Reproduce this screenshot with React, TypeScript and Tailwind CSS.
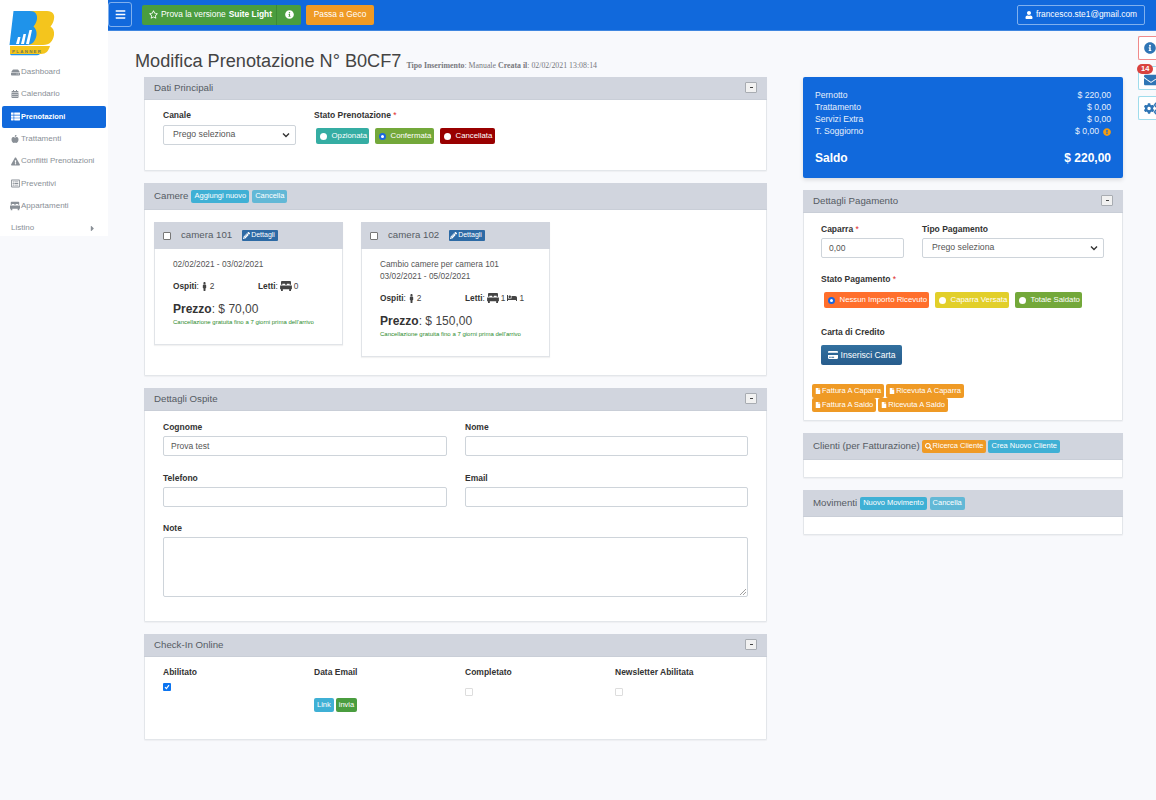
import type { ReactNode } from "react";
import {
  FaAppleAlt,
  FaBars,
  FaBed,
  FaCalendarAlt,
  FaCaretRight,
  FaCogs,
  FaCreditCard,
  FaEnvelope,
  FaExclamationCircle,
  FaExclamationTriangle,
  FaFile,
  FaHdd,
  FaInfoCircle,
  FaMale,
  FaPencilAlt,
  FaRegListAlt,
  FaRegStar,
  FaSearch,
  FaThList,
  FaUser,
} from "react-icons/fa";

function Logo() {
  return (
    <svg width="46" height="46" viewBox="0 0 46 46" className="block">
      <path d="M20 1h18c6 0 8 4 7 8-.5 3-2 6-3.500 7.500C44 18 45.500 21 45 25c-1 6-4 10-11 10H20z" fill="#f4c51d" />
      <path d="M4.500 1h16c6 0 8 3.500 7.500 8-.5 3-2 6-3.500 7.500 2 2 3.500 4.500 3 8.500-1 6-4 10-10 10H.5z" fill="#1f93ea" />
      <path d="M7 34l2-7h2.500l-1.500 7zM12 34l2.500-10H17l-2 10zM17 34l3.500-14H23l-3 14z" fill="#fff" />
      <path d="M1 36h40c-1.500 5-4 8-9 8H1z" fill="#f4c51d" />
      <path d="M1 44h30c-1 .8-2 1.200-3 1.200H2z" fill="#1f93ea" />
      <text x="3" y="42.500" fontSize="4.400" letterSpacing="1.300" fill="#6f7a55" fontFamily="'Liberation Sans', sans-serif" fontWeight="700">
        PLANNER
      </text>
    </svg>
  );
}

// front view bed, the fa set only has the side one
function FrontBed() {
  return (
    <svg width="12" height="10" viewBox="0 0 13 11" className="inline-block" fill="currentColor">
      <path d="M2 0h9a1 1 0 0 1 1 1v3h-1.500V3h-3v1h-2V3h-3v1H1V1a1 1 0 0 1 1-1z" />
      <path d="M0 5h13v4h-1v2h-2V9H3v2H1V9H0z" />
    </svg>
  );
}

const menu = [
  { label: "Dashboard", icon: <FaHdd size={9} /> },
  { label: "Calendario", icon: <FaCalendarAlt size={8} /> },
  { label: "Prenotazioni", icon: <FaThList size={9} />, active: true },
  { label: "Trattamenti", icon: <FaAppleAlt size={8} /> },
  { label: "Conflitti Prenotazioni", icon: <FaExclamationTriangle size={9} /> },
  { label: "Preventivi", icon: <FaRegListAlt size={9} /> },
  { label: "Appartamenti", icon: <FrontBed /> },
];

function Sidebar() {
  return (
    <aside className="w-[108px] h-[236px] shrink-0 bg-white">
      <div className="h-[61px] pt-[10px] pl-[9px]">
        <Logo />
      </div>
      {menu.map((m) => (
        <div
          key={m.label}
          className={
            m.active
              ? "mx-[2px] h-[22.3px] rounded-[2px] bg-[#1169dc] text-white font-semibold flex items-center gap-[1px] pl-[8px] text-[7.4px] whitespace-nowrap"
              : "mx-[2px] h-[22.3px] text-[#8a9097] flex items-center gap-[1px] pl-[8px] text-[8px] whitespace-nowrap"
          }
        >
          <span className="w-[10px] flex justify-center shrink-0">{m.icon}</span>
          {m.label}
        </div>
      ))}
      <div className="mx-[2px] h-[22px] text-[#8a9097] flex items-center justify-between pl-[9px] pr-[9px] text-[8px]">
        Listino
        <FaCaretRight size={9} />
      </div>
    </aside>
  );
}

function Topbar() {
  return (
    <header className="h-[31px] bg-[#1169dc] border-b border-[#3f86e0] flex items-center pr-[11px] text-white">
      <button className="w-[24px] h-[25px] -mt-[1px] rounded-[3px] border border-[#7fb0ee] flex items-center justify-center">
        <FaBars size={11} />
      </button>
      <div className="ml-[10px] flex w-[159px] h-[20px] -mt-[1px] rounded-[2px] bg-[#4a9d3f] text-[8.4px]">
        <div className="w-[135px] flex items-center gap-[3px] pl-[7px] border-r border-[#3d8a35]">
          <FaRegStar size={9} />
          <span>Prova la versione</span>
          <span className="font-bold">Suite Light</span>
        </div>
        <div className="flex-1 flex items-center justify-center">
          <FaInfoCircle size={9} />
        </div>
      </div>
      <div className="ml-[5px] w-[68px] h-[20px] -mt-[1px] rounded-[2px] bg-[#ef9a25] text-[8.4px] flex items-center justify-center">
        Passa a Geco
      </div>
      <div className="ml-auto h-[20px] -mt-[1px] w-[128px] rounded-[2px] border border-[#7fb0ee] text-[8.4px] flex items-center justify-center gap-[3px] whitespace-nowrap">
        <FaUser size={8} />
        francesco.ste1@gmail.com
      </div>
    </header>
  );
}

function Panel({
  title,
  extra,
  collapse = true,
  className = "",
  children,
}: {
  title: string;
  extra?: ReactNode;
  collapse?: boolean;
  className?: string;
  children?: ReactNode;
}) {
  return (
    <section className={"bg-white border border-[#e3e6ea] rounded-[1px] shadow-[0_1px_1px_rgba(0,0,0,0.04)] " + className}>
      <div
        className={
          (extra ? "h-[27px]" : "h-[23px]") +
          " -m-px mb-0 bg-[#d1d5de] flex items-center px-[10px] text-[#555b63] border-b border-[#c9ced7]"
        }
      >
        <span className="text-[9.7px] whitespace-nowrap">{title}</span>
        {extra}
        {collapse && (
          <span className="ml-auto w-[12px] h-[11px] -mt-px bg-[#f1f1f1] border border-[#a8acb2] rounded-[1px] flex items-center justify-center">
            <span className="w-[3px] h-[1px] bg-[#444]" />
          </span>
        )}
      </div>
      {children}
    </section>
  );
}

function Label({ children, req }: { children: ReactNode; req?: boolean }) {
  return (
    <div className="text-[8.5px] font-bold text-[#333] leading-[12px] whitespace-nowrap">
      {children}
      {req && <span className="text-[#e02b2b] font-normal"> *</span>}
    </div>
  );
}

function Radio({ color, label, on, w }: { color: string; label: string; on?: boolean; w: string }) {
  return (
    <span className={"h-[16px] rounded-[2px] text-white text-[7.8px] flex items-center gap-[5px] pl-[3.5px] whitespace-nowrap " + color + " " + w}>
      <span
        className={
          on
            ? "w-[7px] h-[7px] rounded-full bg-white border-[2px] border-[#1a66e0] shrink-0"
            : "w-[7px] h-[7px] rounded-full bg-white shrink-0"
        }
      />
      {label}
    </span>
  );
}

function Tag({ color, children, h = "h-[13px]" }: { color: string; children: ReactNode; h?: string }) {
  return (
    <span className={"inline-flex items-center gap-[1px] px-[3px] rounded-[2px] text-white text-[7.5px] font-normal whitespace-nowrap " + h + " " + color}>
      {children}
    </span>
  );
}

function Input({ value, className = "" }: { value?: string; className?: string }) {
  return (
    <div className={"h-[20px] bg-white border border-[#ced4da] rounded-[2px] flex items-center px-[7px] text-[8.5px] text-[#555] " + className}>
      {value}
    </div>
  );
}

function Select({ className = "" }: { className?: string }) {
  return (
    <div className={"h-[20px] bg-white border border-[#ced4da] rounded-[2px] flex items-center justify-between pl-[9px] pr-[5px] text-[8.7px] text-[#555] " + className}>
      Prego seleziona
      <svg width="8" height="6" viewBox="0 0 8 6" fill="none" stroke="#333" strokeWidth="1.4">
        <path d="M1 1.500l3 3 3-3" />
      </svg>
    </div>
  );
}

function RoomCard({
  name,
  note,
  dates,
  beds,
  price,
  className,
}: {
  name: string;
  note?: string;
  dates: string;
  beds: ReactNode;
  price: string;
  className: string;
}) {
  return (
    <div className={"w-[189px] bg-white border border-[#e1e4e8] shadow-[0_1px_1px_rgba(0,0,0,0.05)] " + className}>
      <div className="h-[27px] -m-px mb-0 bg-[#d1d5de] flex items-center pl-[9px] text-[9.7px] text-[#555b63]">
        <span className="w-[8px] h-[8px] bg-white border border-[#777] rounded-[1px]" />
        <span className="ml-[10px]">{name}</span>
        <span className="ml-[10px] h-[11px] px-[1px] pr-[3px] bg-[#2d6aa5] rounded-[1px] text-white text-[7px] flex items-center gap-[1px]">
          <FaPencilAlt size={7} />
          Dettagli
        </span>
      </div>
      <div className="pl-[18px] pt-[9px] text-[8.3px] text-[#555]">
        {note && <div className="leading-[12px]">{note}</div>}
        <div className="leading-[12px]">{dates}</div>
        <div className="mt-[10px] flex h-[12px] items-center text-[#444]">
          <div className="w-[85px] flex items-center gap-[1px]">
            <span>
              <b className="text-[#333]">Ospiti</b>:
            </span>
            <FaMale size={9} /> 2
          </div>
          <div className="flex items-center gap-[2px]">
            <span>
              <b className="text-[#333]">Letti</b>:
            </span>
            {beds}
          </div>
        </div>
        <div className="mt-[10px] text-[12px] leading-[14px] text-[#444]">
          <b className="text-[#333]">Prezzo</b>: $ {price}
        </div>
        <div className="text-[6px] leading-[9px] mt-[2px] text-[#2e8b2e] whitespace-nowrap">
          Cancellazione gratuita fino a 7 giorni prima dell'arrivo
        </div>
      </div>
    </div>
  );
}

function LeftColumn() {
  return (
    <div className="w-[623px] flex flex-col gap-[12px]">
      <Panel title="Dati Principali" className="h-[94px]">
        <div className="pl-[18px] pt-[9px] flex">
          <div className="w-[151px]">
            <Label>Canale</Label>
            <Select className="w-[133px] mt-[4px]" />
          </div>
          <div>
            <Label req>Stato Prenotazione</Label>
            <div className="mt-[7px] ml-[2px] flex gap-[6px]">
              <Radio color="bg-[#35ada3]" label="Opzionata" w="w-[53px]" />
              <Radio color="bg-[#73a83a]" label="Confermata" on w="w-[59px]" />
              <Radio color="bg-[#990000]" label="Cancellata" w="w-[55px]" />
            </div>
          </div>
        </div>
      </Panel>
      <Panel
        title="Camere"
        collapse={false}
        className="h-[193px]"
        extra={
          <span className="ml-[3px] flex gap-[3px]">
            <Tag color="bg-[#3fb0d5]">Aggiungi nuovo</Tag>
            <Tag color="bg-[#62b8d6]">Cancella</Tag>
          </span>
        }
      >
        <div className="pl-[9px] pt-[12px] flex gap-[18px] items-start">
          <RoomCard name="camera 101" dates="02/02/2021 - 03/02/2021" price="70,00" className="h-[123px]" beds={<><FrontBed /> 0</>} />
          <RoomCard
            name="camera 102"
            note="Cambio camere per camera 101"
            dates="03/02/2021 - 05/02/2021"
            price="150,00"
            className="h-[135px]"
            beds={<><FrontBed /> 1<FaBed size={10} /> 1</>}
          />
        </div>
      </Panel>
      <Panel title="Dettagli Ospite" className="h-[234px]">
        <div className="px-[18px] pt-[10px] grid grid-cols-[284px_283px] gap-x-[18px]">
          <div className="h-[51px]">
            <Label>Cognome</Label>
            <Input value="Prova test" className="mt-[3px]" />
          </div>
          <div className="h-[51px]">
            <Label>Nome</Label>
            <Input className="mt-[3px]" />
          </div>
          <div className="h-[50px]">
            <Label>Telefono</Label>
            <Input className="mt-[3px]" />
          </div>
          <div className="h-[50px]">
            <Label>Email</Label>
            <Input className="mt-[3px]" />
          </div>
          <div className="col-span-2">
            <Label>Note</Label>
            <div className="relative mt-[3px] h-[60px] bg-white border border-[#ced4da] rounded-[2px]">
              <svg width="6" height="6" viewBox="0 0 6 6" className="absolute right-[1px] bottom-[1px]" stroke="#777" strokeWidth="0.7">
                <path d="M0 6l6-6M3 6l3-3" />
              </svg>
            </div>
          </div>
        </div>
      </Panel>
      <Panel title="Check-In Online" className="h-[106px]">
        <div className="pl-[18px] pt-[9px] grid grid-cols-[151px_151px_150px_130px]">
          <div>
            <Label>Abilitato</Label>
            <span className="mt-[5px] w-[8px] h-[8px] bg-[#0b74f0] rounded-[1px] flex items-center justify-center">
              <svg width="6" height="6" viewBox="0 0 6 6" fill="none" stroke="#fff" strokeWidth="1.2">
                <path d="M1 3.200l1.400 1.400L5 1.200" />
              </svg>
            </span>
          </div>
          <div>
            <Label>Data Email</Label>
            <div className="mt-[20px] flex gap-[2px]">
              <Tag color="bg-[#3fb0d5]" h="h-[14px]">Link</Tag>
              <Tag color="bg-[#4a9d3f]" h="h-[14px]">invia</Tag>
            </div>
          </div>
          <div>
            <Label>Completato</Label>
            <span className="block mt-[10px] w-[8px] h-[8px] bg-white border border-[#ddd] rounded-[1px]" />
          </div>
          <div>
            <Label>Newsletter Abilitata</Label>
            <span className="block mt-[10px] w-[8px] h-[8px] bg-white border border-[#ddd] rounded-[1px]" />
          </div>
        </div>
      </Panel>
    </div>
  );
}

function OrangeDoc({ children }: { children: ReactNode }) {
  return (
    <Tag color="bg-[#ef9a25]" h="h-[14px]">
      <FaFile size={6} />
      <span className="text-[7.5px]">{children}</span>
    </Tag>
  );
}

function SummaryRow({ label, value }: { label: string; value: ReactNode }) {
  return (
    <div className="flex justify-between h-[12px] items-center text-[8.6px] text-[#e6effb]">
      <span>{label}</span>
      <span className="flex items-center gap-[4px]">{value}</span>
    </div>
  );
}

function RightColumn() {
  return (
    <div className="w-[320px] ml-[36px] flex flex-col">
      <div className="h-[101px] bg-[#1169dc] rounded-[2px] px-[12px] pt-[12px] shadow-[0_2px_4px_rgba(0,0,0,0.12)]">
        <div className="pt-[0.5px]">
          <SummaryRow label="Pernotto" value="$ 220,00" />
          <SummaryRow label="Trattamento" value="$ 0,00" />
          <SummaryRow label="Servizi Extra" value="$ 0,00" />
          <SummaryRow label="T. Soggiorno" value={<>$ 0,00 <FaExclamationCircle size={8} className="text-[#f39c12]" /></>} />
        </div>
        <div className="mt-[11.5px] flex justify-between text-[12px] font-bold text-white">
          <span>Saldo</span>
          <span>$ 220,00</span>
        </div>
      </div>
      <Panel title="Dettagli Pagamento" className="h-[231px] mt-[12px]">
        <div className="pl-[17px] pt-[10px]">
          <div className="flex">
            <div className="w-[101px]">
              <Label req>Caparra</Label>
              <Input value="0,00" className="w-[83px] mt-[3px]" />
            </div>
            <div>
              <Label>Tipo Pagamento</Label>
              <Select className="w-[182px] mt-[3px]" />
            </div>
          </div>
          <div className="mt-[15px]">
            <Label req>Stato Pagamento</Label>
          </div>
          <div className="mt-[7px] ml-[3px] flex gap-[6px]">
            <Radio color="bg-[#ff6f2c]" label="Nessun Importo Ricevuto" on w="w-[105px]" />
            <Radio color="bg-[#e2cf2a]" label="Caparra Versata" w="w-[74px]" />
            <Radio color="bg-[#73a83a]" label="Totale Saldato" w="w-[67px]" />
          </div>
          <div className="mt-[18px]">
            <Label>Carta di Credito</Label>
          </div>
          <div className="mt-[7px] w-[81px] h-[20px] rounded-[2px] bg-gradient-to-b from-[#32709f] to-[#275c8c] text-white text-[8.6px] flex items-center justify-center gap-[3px]">
            <FaCreditCard size={10} />
            Inserisci Carta
          </div>
        </div>
        <div className="mt-[19px] ml-[8px] flex flex-col">
          <div className="flex gap-[2px]">
            <OrangeDoc>Fattura A Caparra</OrangeDoc>
            <OrangeDoc>Ricevuta A Caparra</OrangeDoc>
          </div>
          <div className="flex gap-[2px]">
            <OrangeDoc>Fattura A Saldo</OrangeDoc>
            <OrangeDoc>Ricevuta A Saldo</OrangeDoc>
          </div>
        </div>
      </Panel>
      <Panel
        title="Clienti (per Fatturazione)"
        collapse={false}
        className="h-[45px] mt-[12px]"
        extra={
          <span className="ml-[2px] flex gap-[2px]">
            <Tag color="bg-[#ef9a25]">
              <FaSearch size={7} /> Ricerca Cliente
            </Tag>
            <Tag color="bg-[#3fb0d5]">Crea Nuovo Cliente</Tag>
          </span>
        }
      />
      <Panel
        title="Movimenti"
        collapse={false}
        className="h-[45px] mt-[12px]"
        extra={
          <span className="ml-[3px] flex gap-[3px]">
            <Tag color="bg-[#3fb0d5]">Nuovo Movimento</Tag>
            <Tag color="bg-[#62b8d6]">Cancella</Tag>
          </span>
        }
      />
    </div>
  );
}

function SideTabs() {
  return (
    <div className="absolute right-0 top-[36px] flex flex-col gap-[6px] w-[18px]">
      <div className="h-[24px] bg-white border border-r-0 border-[#f08a8a] flex items-center pl-[5px] rounded-l-[2px] text-[#2f75b5]">
        <FaInfoCircle size={12} className="shrink-0" />
      </div>
      <div className="relative h-[24px] bg-white border border-r-0 border-[#9fdcec] flex items-center pl-[5px] rounded-l-[2px] text-[#2f75b5]">
        <FaEnvelope size={14} className="shrink-0 mt-[3px]" />
        <span className="absolute -left-[2px] -top-[3px] h-[10px] px-[4px] rounded-full bg-[#d9423e] text-white text-[7.5px] font-bold leading-[10px]">
          14
        </span>
      </div>
      <div className="h-[24px] bg-white border border-r-0 border-[#9fdcec] flex items-center pl-[5px] rounded-l-[2px] text-[#2f75b5] overflow-hidden">
        <FaCogs size={15} className="shrink-0" />
      </div>
    </div>
  );
}

export default function App() {
  return (
    <div className="relative w-[1156px] h-[800px] overflow-hidden flex items-start bg-[#f8f9fc] font-['Liberation_Sans',Arial,sans-serif]">
      <Sidebar />
      <div className="flex-1 min-w-0">
        <Topbar />
        <div className="pl-[36px] pt-[18px]">
          <div className="h-[28px] pb-[4px] flex items-end -ml-[9px] text-[#444]">
            <h1 className="text-[18.15px] leading-[24px] whitespace-nowrap">Modifica Prenotazione N° B0CF7</h1>
            <div className="ml-[5px] mb-[1px] font-['Liberation_Serif',serif] text-[7.85px] text-[#77787c] whitespace-nowrap">
              <b>Tipo Inserimento</b>: Manuale <b>Creata il</b>: 02/02/2021 13:08:14
            </div>
          </div>
          <div className="flex">
            <LeftColumn />
            <RightColumn />
          </div>
        </div>
      </div>
      <SideTabs />
    </div>
  );
}
